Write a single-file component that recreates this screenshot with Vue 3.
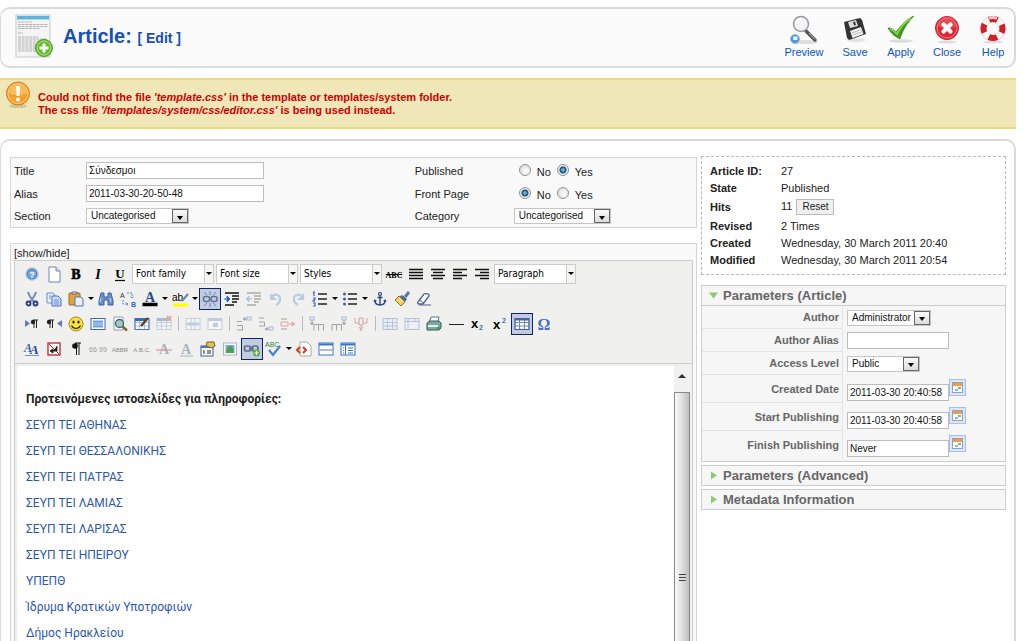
<script setup>
import { ref } from 'vue'

const title = ref('Σύνδεσμοι')
const alias = ref('2011-03-30-20-50-48')
const published = ref('yes')
const frontPage = ref('no')
const createdDate = ref('2011-03-30 20:40:58')
const startDate = ref('2011-03-30 20:40:58')
const finishDate = ref('Never')
const authorAlias = ref('')

const actions = [
  { name: 'Preview', art: '<ellipse cx="17" cy="28" rx="13" ry="2" fill="#ddd"/><path d="M18 17l9 9" stroke="#555" stroke-width="3.5" stroke-linecap="round"/><path d="M21 19l6 6.500" stroke="#bbb" stroke-width="1"/><circle cx="13" cy="10" r="7.500" fill="#f1f3f4" stroke="#999" stroke-width="1.500"/><path d="M8 10a5 5 0 0 1 5-5" fill="none" stroke="#fff" stroke-width="2"/><circle cx="7" cy="25" r="4.500" fill="#4d98dd" stroke="#8cbcea"/><rect x="5" y="22.500" width="4.500" height="3.500" rx="1" fill="#fff"/>' },
  { name: 'Save', art: '<ellipse cx="17" cy="26" rx="9" ry="2" fill="#e2e2e2"/><path d="M5 8L21 4l2 2 4 14-17 6-2-2z" fill="#333"/><path d="M9 8l8-2 2 6-8 2z" fill="#ddd"/><path d="M14 8l2-.500 1 3.500-2 .500z" fill="#333"/><path d="M11 17l11-4 2.500 7-11 4z" fill="#f5f5f5"/><path d="M12.500 19l10-3.500M13.500 21l10-3.500" stroke="#aaa" stroke-width=".8"/>' },
  { name: 'Apply', art: '<ellipse cx="16" cy="27" rx="12" ry="1.800" fill="#ddd"/><path d="M3 14c3-.500 5 1 8 4C16 11 22 5 29 2c-6 6-11 13-14 23-4-2-9-5-12-11z" fill="#3c9b12" stroke="#2c7c0b" stroke-width=".6"/><path d="M5 15c3 .5 4 2.500 7 5C16 12 20 8 26 4" fill="none" stroke="#86d353" stroke-width="1.800"/>' },
  { name: 'Close', art: '<ellipse cx="16" cy="28" rx="10" ry="1.500" fill="#ddd"/><circle cx="16" cy="14" r="11.500" fill="#e02633" stroke="#c41f2b"/><circle cx="16" cy="14" r="10" fill="none" stroke="#f18088"/><path d="M6.500 12a9.500 9.500 0 0 1 19 0c-5 3-13 3-19 0z" fill="#ee6169" opacity=".6"/><path d="M12.500 10.500l7 7M19.500 10.500l-7 7" stroke="#fff" stroke-width="4.200" stroke-linecap="round"/>' },
  { name: 'Help', art: '<ellipse cx="16" cy="28" rx="10" ry="1.500" fill="#ddd"/><circle cx="16" cy="14.500" r="9.500" fill="none" stroke="#ccc" stroke-width="6.500"/><circle cx="16" cy="14.500" r="9.500" fill="none" stroke="#f7f7f7" stroke-width="5.500"/><circle cx="16" cy="14.500" r="9.500" fill="none" stroke="#d51d25" stroke-width="6" stroke-dasharray="8.500 6.420" stroke-dashoffset="4.250"/><path d="M12 4.200a11 11 0 0 1 8 0" fill="none" stroke="#f6c3c5" stroke-width="3"/>' }
]

const lines = (set) => '<path d="' + set.map(([x, y, w]) => `M${x} ${y}h${w}`).join('') + '" stroke="#111" stroke-width="1.500"/>'
const grid = (c, f) => `<rect x="3" y="4.500" width="14" height="11" fill="${f}" stroke="${c}"/><path d="M3 8.500h14M3 12h14M7.500 4.500v11M12.500 4.500v11" stroke="${c}"/>`
const doc = '<path d="M5 3h7l4 4v11H5z" fill="#fff" stroke="#6d86b3"/><path d="M12 3v4h4" fill="#dbe5f6" stroke="#6d86b3"/>'

const art = {
  help: '<circle cx="10" cy="10" r="6" fill="#74a6da" stroke="#b2c6dd" stroke-width="1.500"/><circle cx="10" cy="10" r="4.800" fill="none" stroke="#4d80ba"/><text x="10" y="13.500" text-anchor="middle" font-size="9" font-weight="bold" fill="#fff">?</text>',
  newdoc: doc,
  bold: '<text x="10" y="15" text-anchor="middle" font-family="Liberation Serif" font-size="14" font-weight="bold" stroke="#000" stroke-width=".6">B</text>',
  italic: '<text x="10" y="15" text-anchor="middle" font-family="Liberation Serif" font-size="14" font-weight="bold" font-style="italic">I</text>',
  underline: '<text x="10" y="14" text-anchor="middle" font-family="Liberation Serif" font-size="13" font-weight="bold">U</text><path d="M5 16.500h10" stroke="#000" stroke-width="1.200"/>',
  strike: '<text x="10" y="13.500" text-anchor="middle" font-family="Liberation Serif" font-size="8" font-weight="bold">ABC</text><path d="M2 10.500h16" stroke="#000"/>',
  justify: lines([[3, 5.5, 14], [3, 8.5, 14], [3, 11.5, 14], [3, 14.5, 14]]),
  center: lines([[3, 5.5, 14], [5, 8.5, 10], [3, 11.5, 14], [5, 14.5, 10]]),
  left: lines([[3, 5.5, 14], [3, 8.5, 9], [3, 11.5, 14], [3, 14.5, 9]]),
  right: lines([[3, 5.5, 14], [8, 8.5, 9], [3, 11.5, 14], [8, 14.5, 9]]),
  cut: '<path d="M6 3c1 4 3 6 6 10M14 3c-1 4-3 6-6 10" stroke="#7590b8" stroke-width="2" fill="none"/><circle cx="6.500" cy="14.500" r="2" fill="none" stroke="#243f87" stroke-width="1.800"/><circle cx="13.500" cy="14.500" r="2" fill="none" stroke="#243f87" stroke-width="1.800"/>',
  copy: '<path d="M3 4h6l2 2v8H3z" fill="#e6effd" stroke="#6e8fcd"/><path d="M8 7h6l3 3v7H8z" fill="#c9dcf9" stroke="#4d72ba"/><path d="M10 11h5M10 13h5M10 15h5M5 7h2M5 9h2" stroke="#6e8fcd"/>',
  paste: '<rect x="3" y="4" width="11" height="12" rx="1" fill="#dfa43b" stroke="#9b6c1d"/><path d="M6 5V3h5v2z" fill="#eee" stroke="#666"/><path d="M9 8h6l2 2v7H9z" fill="#e9f1fe" stroke="#5275b4"/>',
  find: '<path d="M5 4h3v4h4V4h3l2 8v4h-5v-5H8v5H3v-4z" fill="#6b90cc" stroke="#3d5c9c"/><path d="M5 9l-1 4M14 9l1 4" stroke="#c9daf6"/>',
  replace: '<text x="2" y="9" font-size="7" fill="#333">A</text><text x="13" y="18" font-size="7" font-weight="bold" fill="#3764c8">B</text><path d="M9 4h5v5M14 9l-2-2M14 9l2-2M5 11v4h5M10 15l-2-2M10 15l-2 2" stroke="#5886d0" fill="none" stroke-dasharray="2 1"/>',
  forecolor: '<text x="10" y="13" text-anchor="middle" font-family="Liberation Serif" font-size="14" font-weight="bold" fill="#244c8e">A</text><path d="M2.500 15.500h15" stroke="#000" stroke-width="3.500"/>',
  backcolor: '<text x="2" y="12" font-size="10">ab</text><path d="M12 12l6-7" stroke="#6c86ac" stroke-width="2"/><path d="M3 16h15" stroke="#ff0" stroke-width="3"/>',
  unlink: '<rect x="3.500" y="7.500" width="6" height="5" rx="2" fill="none" stroke="#597398" stroke-width="1.500"/><rect x="11" y="7.500" width="6" height="5" rx="2" fill="none" stroke="#597398" stroke-width="1.500"/><path d="M10 2v4M10 14v4M4 3l3 3M16 3l-3 3M4 17l3-3M16 17l-3-3" stroke="#7285a4"/>',
  outdent: '<path d="M3 4h14M10 7h7M10 10h7M10 13h5M3 16h9" stroke="#111" stroke-width="1.500"/><path d="M2 10h6M8 10l-3-3v6z" fill="#2d62bb" stroke="#2d62bb"/>',
  indent: '<g opacity=".3"><path d="M3 4h14M10 7h7M10 10h7M10 13h5M3 16h9" stroke="#111" stroke-width="1.500"/><path d="M2 10h6M2 10l3-3v6z" fill="#2d62bb" stroke="#2d62bb"/></g>',
  undo: '<path d="M5 8c5-5 10-1 9 3 0 2-2 4-4 5" fill="none" stroke="#b8cbe1" stroke-width="2.200"/><path d="M4 4v7h7z" fill="#b8cbe1"/>',
  redo: '<path d="M15 8C10 3 5 7 6 11c0 2 2 4 4 5" fill="none" stroke="#b8cbe1" stroke-width="2.200"/><path d="M16 4v7H9z" fill="#b8cbe1"/>',
  numlist: '<path d="M8 5h9M8 10h9M8 15h9" stroke="#222" stroke-width="1.600"/><path d="M3 4l1-1v4M3 9h2v1l-2 2h2M3 14h2v3H3" fill="none" stroke="#3665c9" stroke-width="1.200"/>',
  bullist: '<path d="M8 5h9M8 10h9M8 15h9" stroke="#222" stroke-width="1.600"/><circle cx="4.500" cy="5" r="1.500" fill="#3c61a1"/><circle cx="4.500" cy="10" r="1.500" fill="#3c61a1"/><circle cx="4.500" cy="15" r="1.500" fill="#3c61a1"/>',
  anchor: '<circle cx="10" cy="5" r="1.500" fill="none" stroke="#234889" stroke-width="1.200"/><path d="M10 6.500v9M7.500 8.500h5M5 11.500c0 3 2 4.500 5 4.500s5-1.500 5-4.500" fill="none" stroke="#234889" stroke-width="1.400"/><path d="M3.500 13l1-3 2.500 2zM16.500 13l-1-3-2.500 2z" fill="#234889"/>',
  clean: '<path d="M13 8l4-5" stroke="#5a78a8" stroke-width="3"/><path d="M10 6l5 4-2 3-6-5z" fill="#49699c"/><path d="M7 7l6 6-4 4-6-6z" fill="#f2cc56" stroke="#9a7a28"/><path d="M7 9l4 4M6 11l3 3" stroke="#fff4ba"/>',
  eraser: '<path d="M4 13l6-8c2-1 6 0 5 2l-6 8H5c-1 0-2-1-1-2z" fill="#fff" stroke="#49658f" stroke-width="1.300"/><path d="M5 11l5 3M5 16h12" stroke="#49658f"/>',
  ltr: '<path d="M3 6v7l5-3.500z" fill="#5b7cb5"/><path d="M12 6v8M14.500 6v8M16 6h-5" stroke="#222"/><circle cx="11" cy="8" r="2.200" fill="#222"/>',
  rtl: '<path d="M18 6v7l-5-3.500z" fill="#5b7cb5"/><path d="M6 6v8M8.500 6v8M10 6H5" stroke="#222"/><circle cx="5" cy="8" r="2.200" fill="#222"/>',
  smile: '<circle cx="10" cy="10" r="7" fill="#fde338" stroke="#a7861b"/><ellipse cx="7.500" cy="8" rx="1" ry="1.600"/><ellipse cx="12.500" cy="8" rx="1" ry="1.600"/><path d="M5.500 11.500c2 4 7 4 9 0" fill="none" stroke="#222" stroke-width="1.200"/>',
  screen: '<rect x="3" y="4.500" width="14" height="11" fill="#fff" stroke="#3969b5"/><rect x="5" y="6.500" width="10" height="7" fill="#6f9fdf"/><path d="M5 9h10M5 11h10" stroke="#b6d2f5"/>',
  preview: '<path d="M4 3h9v13H4z" fill="#fff" stroke="#8da0bd"/><circle cx="9.500" cy="9.500" r="4" fill="#9dcfba" stroke="#47617d" stroke-width="1.300"/><path d="M12.500 12.500l4.500 4" stroke="#806235" stroke-width="2.500"/>',
  tableedit: grid('#a9bfe0', '#fff') + '<rect x="3" y="4.500" width="14" height="11" fill="none" stroke="#4c73b3"/><path d="M3 5.500h12" stroke="#3b6bbb" stroke-width="3"/><path d="M9 12l7-8" stroke="#5c4823" stroke-width="2.500"/>',
  tabledel: '<g opacity=".4">' + grid('#7c9dd0', '#fff') + '<path d="M3 5.500h12" stroke="#3b6bbb" stroke-width="3"/><path d="M13 2l4 5M17 2l-4 5" stroke="#c33" stroke-width="2"/></g>',
  rowprops: '<g opacity=".4"><rect x="3" y="4.500" width="14" height="11" fill="#fff" stroke="#889bbd"/><path d="M3 10h14M8 5v10M12 5v10" stroke="#889bbd"/><path d="M4 10h12" stroke="#6f9be8" stroke-width="3"/></g>',
  cellprops: '<g opacity=".4"><rect x="3" y="4.500" width="14" height="11" fill="#fff" stroke="#889bbd"/><path d="M3 6h14" stroke="#6f9be8" stroke-width="2"/><rect x="8" y="9" width="5" height="4" fill="#6f9be8"/></g>',
  rowbefore: '<g opacity=".4" stroke="#333" fill="none"><path d="M3 7.500h5M3 11.500h5.500M3 16h5.500M8.500 11.500v5"/><path d="M9 5h4M9 5l2-1.500v3z"/><rect x="13" y="3" width="4" height="3" stroke="#36c"/></g>',
  rowafter: '<g opacity=".4" stroke="#333" fill="none"><path d="M3 4h5M3 8h5.500M3 12h5.500M8.500 8v4.500"/><path d="M9 15h4M9 15l2-1.500v3z"/><rect x="13" y="13" width="4" height="3" stroke="#36c"/></g>',
  rowdel: '<g opacity=".4" fill="none"><path d="M3 5h6M3 15h6" stroke="#333"/><path d="M3 8h7v4H3zM11 10h6M17 10l-3-2v4z" stroke="#c33"/></g>',
  colbefore: '<g opacity=".4" stroke="#333" fill="none"><path d="M7 10.500h4.500v6M7 10.500v6M12 10.500h4.500v6"/><path d="M5 6v5M5 11l-1.500-2h3z"/><rect x="3" y="3" width="4" height="3" stroke="#36c"/></g>',
  colafter: '<g opacity=".4" stroke="#333" fill="none"><path d="M3 10.500h4.500v6M3 10.500v6M8 10.500h4.500v6"/><path d="M15 6v5M15 11l-1.500-2h3z"/><rect x="13" y="3" width="4" height="3" stroke="#36c"/></g>',
  coldel: '<g opacity=".4" fill="none"><path d="M4 4v5h4M16 4v5h-4" stroke="#c33"/><path d="M8 4h4v7H8zM10 11v6M8 13l2 3 2-3" stroke="#a33"/></g>',
  split: '<g opacity=".45">' + grid('#6b8cc2', '#e7effb') + '</g>',
  merge: '<g opacity=".45"><rect x="3" y="4.500" width="14" height="11" fill="#e7effb" stroke="#6b8cc2"/><path d="M3 7.500h14M6 4v12M13 4v3" stroke="#6b8cc2"/></g>',
  print: '<path d="M7 3h8l-1 5H5z" fill="#fff" stroke="#597282"/><path d="M3 9l3-2h9l2 2v5l-2 2H3z" fill="#7fa6a0" stroke="#355a5a"/><path d="M4 12h10" stroke="#dfeeea" stroke-width="2"/><path d="M13 14h3" stroke="#39a439" stroke-width="2"/>',
  hr: '<path d="M3 10.500h15" stroke="#222"/>',
  sub: '<text x="3" y="14" font-size="13" font-weight="bold">x</text><text x="11" y="16" font-size="7" font-weight="bold" fill="#3f719f">2</text>',
  sup: '<text x="3" y="15" font-size="13" font-weight="bold">x</text><text x="12" y="9" font-size="7" font-weight="bold" fill="#3f719f">2</text>',
  visual: grid('#6f89b8', '#fff') + '<rect x="3" y="4.500" width="14" height="11" fill="none" stroke="#4265a3"/><path d="M3 5.500h14" stroke="#4265a3" stroke-width="2"/>',
  omega: '<text x="10" y="15.500" text-anchor="middle" font-family="Liberation Serif" font-size="16" font-weight="bold" fill="#4a72c4">Ω</text>',
  styleprops: '<text x="2" y="13" font-family="Liberation Serif" font-size="12" font-style="italic" font-weight="bold" fill="#2f65bd">A</text><text x="8" y="15" font-family="Liberation Serif" font-size="13" font-style="italic" font-weight="bold" fill="#26458c">A</text><path d="M3 16.500h14" stroke="#7293c6"/>',
  nobreak: '<rect x="4" y="4" width="12" height="12" fill="#fff" stroke="#c2212b" stroke-width="1.300"/><path d="M5 5l10 10" stroke="#c2212b"/><path d="M13 7v5H9M9 10v4l-3-2z" fill="#222" stroke="#222"/>',
  para: '<path d="M10.500 4v12M13 4v12M15 4H9" stroke="#111"/><circle cx="9" cy="7" r="2.800" fill="#111"/>',
  quote: '<text x="1" y="13" font-size="7" fill="#999">66</text><text x="11" y="13" font-size="7" fill="#999">99</text>',
  abbr: '<text x="10" y="13" text-anchor="middle" font-size="6" fill="#888">ABBR</text>',
  acro: '<text x="10" y="13" text-anchor="middle" font-size="6" fill="#888">A.B.C.</text>',
  del: '<text x="10" y="15" text-anchor="middle" font-family="Liberation Serif" font-size="14" font-weight="bold" fill="#aab2bf">A</text><path d="M2 11h16" stroke="#dd9b9b" stroke-width="1.300"/>',
  ins: '<text x="10" y="15" text-anchor="middle" font-family="Liberation Serif" font-size="14" font-weight="bold" fill="#aab2bf">A</text><path d="M4 17h13" stroke="#a5bcaa"/>',
  attribs: '<rect x="3" y="7" width="12" height="10" fill="#fff" stroke="#375c98"/><path d="M3 8h12" stroke="#477ac5" stroke-width="2"/><path d="M5 12h2M5 14h2M9 12h4M9 14h4" stroke="#222"/><path d="M9 3h7l1 4-3 2-6-2z" fill="#e6bd57" stroke="#765e26"/>',
  image: '<rect x="3.500" y="4" width="13" height="12" fill="#fff" stroke="#a4b5cf"/><rect x="5.500" y="6" width="9" height="8" fill="#7fa5e7"/><path d="M6 14l1-5c2-3 5-2 6 0l1 5z" fill="#49a34b"/>',
  link: '<rect x="2.500" y="7" width="6" height="5" rx="2" fill="none" stroke="#5d718c" stroke-width="1.700"/><rect x="10" y="7" width="6" height="5" rx="2" fill="none" stroke="#5d718c" stroke-width="1.700"/><path d="M7 9.500h5" stroke="#5d718c" stroke-width="1.700"/><circle cx="14.500" cy="14" r="3.500" fill="#63af48"/><path d="M12.500 14h4M14.500 12v4" stroke="#fff"/>',
  spell: '<text x="1" y="8" font-size="7" fill="#3a8548">ABC</text><path d="M5 11l4 5 7-9" fill="none" stroke="#4884cd" stroke-width="2.300"/>',
  code: '<path d="M6 3h7l4 4v10H6z" fill="#fff" stroke="#aaa"/><path d="M6 8l-3 3 3 3M9 8l3 3-3 3" fill="none" stroke="#de3524" stroke-width="2"/>',
  pagebreak: '<rect x="3" y="4" width="14" height="12" fill="#fff" stroke="#3d76c4"/><path d="M3 5.500h14" stroke="#3d76c4" stroke-width="2"/><path d="M4 11h12" stroke="#64789a"/>',
  template: '<rect x="3" y="4" width="14" height="12" fill="#fff" stroke="#3d76c4"/><path d="M3 5.500h14" stroke="#3d76c4" stroke-width="2"/><path d="M7.500 6v10M10 9h5M10 11.500h5M10 14h5M5 9h1M5 11.500h1M5 14h1" stroke="#3d76c4"/>'
}

// "|" is a separator, "+" gives the button a drop-down arrow, "*" marks it as active,
// and "=" opens a list with the label that follows.
const toolbar = [
  'help newdoc bold italic underline =Font_family =Font_size =Styles strike justify center left right =Paragraph',
  'cut copy paste+ find replace forecolor+ backcolor+ unlink* outdent indent undo redo numlist+ bullist+ anchor clean eraser',
  'ltr rtl smile screen preview tableedit tabledel | rowprops cellprops | rowbefore rowafter rowdel | colbefore colafter coldel | split merge print hr sub sup visual* omega',
  'styleprops nobreak para quote abbr acro del ins attribs image link* spell+ code pagebreak template'
].map((row) => row.split(' ').map((t) => ({
  kind: t === '|' ? 'sep' : t[0] === '=' ? 'list' : 'button',
  name: t.replace(/[+*=]/g, '').replace('_', ' '),
  arrow: t.endsWith('+'),
  active: t.endsWith('*')
})))

const links = [
  'ΣΕΥΠ ΤΕΙ ΑΘΗΝΑΣ', 'ΣΕΥΠ ΤΕΙ ΘΕΣΣΑΛΟΝΙΚΗΣ', 'ΣΕΥΠ ΤΕΙ ΠΑΤΡΑΣ', 'ΣΕΥΠ ΤΕΙ ΛΑΜΙΑΣ', 'ΣΕΥΠ ΤΕΙ ΛΑΡΙΣΑΣ',
  'ΣΕΥΠ ΤΕΙ ΗΠΕΙΡΟΥ', 'ΥΠΕΠΘ', 'Ίδρυμα Κρατικών Υποτροφιών', 'Δήμος Ηρακλείου'
]
</script>

<template>
  <div class="page">
    <header class="head">
      <svg class="head-icon" viewBox="0 0 40 44" aria-hidden="true">
        <rect x="1" y="1" width="34" height="42" fill="#f4f4f4" stroke="#c9c9c9" />
        <rect x="2" y="2" width="32" height="3.500" fill="#5fb5d8" />
        <path d="M2 5.500h32" stroke="#a9d8ea" />
        <path d="M3 8h14M3 10.500h30M3 12.500h30M3 14.500h22M3 19h5M3 23h20M3 25h28M3 27h26M3 29h27M3 31h24M3 33h22M3 35h20M3 37h18" stroke="#b3b3b3" stroke-dasharray="3 .7" />
        <circle cx="29" cy="34" r="8.500" fill="#66bd2c" stroke="#4e9226" />
        <circle cx="29" cy="34" r="7" fill="none" stroke="#b3e687" />
        <path d="M29 29.500v9M24.500 34h9" stroke="#fff" stroke-width="3" />
      </svg>
      <h1>Article: <small>[ Edit ]</small></h1>
      <nav class="actions">
        <a v-for="a in actions" :key="a.name" href="#" :class="{ wide: a.name === 'Preview' }">
          <svg viewBox="0 0 32 32" aria-hidden="true" v-html="a.art"></svg>
          <span>{{ a.name }}</span>
        </a>
      </nav>
    </header>

    <div class="notice" role="alert">
      <svg viewBox="0 0 26 28" aria-hidden="true">
        <ellipse cx="13" cy="25" rx="9" ry="2" fill="#cfc597" />
        <circle cx="13" cy="12.500" r="11.500" fill="#f4a02a" stroke="#d67c14" />
        <circle cx="13" cy="12.500" r="10" fill="none" stroke="#fbd28a" />
        <path d="M4 12a9 9 0 0 1 18 0c-5 3-13 3-18 0z" fill="#fac873" opacity=".7" />
        <path d="M11 5h4l-.600 10h-2.800z" fill="#fff" />
        <circle cx="13" cy="18.500" r="2" fill="#fff" />
      </svg>
      <p>
        Could not find the file <em>'template.css'</em> in the template or templates/system folder.<br />
        The css file <em>'/templates/system/css/editor.css'</em> is being used instead.
      </p>
    </div>

    <main class="content">
      <div class="main-col">
        <form class="box details">
          <label for="title">Title</label>
          <input id="title" v-model="title" class="text" type="text" />
          <span id="published">Published</span>
          <div class="radios" role="radiogroup" aria-labelledby="published">
            <label><input v-model="published" type="radio" name="published" value="no" /><span>No</span></label>
            <label><input v-model="published" type="radio" name="published" value="yes" /><span>Yes</span></label>
          </div>

          <label for="alias">Alias</label>
          <input id="alias" v-model="alias" class="text" type="text" />
          <span id="front">Front Page</span>
          <div class="radios" role="radiogroup" aria-labelledby="front">
            <label><input v-model="frontPage" type="radio" name="front" value="no" /><span>No</span></label>
            <label><input v-model="frontPage" type="radio" name="front" value="yes" /><span>Yes</span></label>
          </div>

          <label for="section">Section</label>
          <span class="select section"><select id="section"><option>Uncategorised</option></select><i></i></span>
          <label for="category">Category</label>
          <span class="select category"><select id="category"><option>Uncategorised</option></select><i></i></span>
        </form>

        <section class="box editor">
          <a class="toggle" href="#">[show/hide]</a>
          <div class="mce">
            <div class="toolbar">
              <div v-for="(row, r) in toolbar" :key="r" class="tools">
                <template v-for="(t, i) in row" :key="i">
                  <span v-if="t.kind === 'sep'" class="sep"></span>
                  <span v-else-if="t.kind === 'list'" class="list">
                    <select :aria-label="t.name"><option>{{ t.name }}</option></select><i></i>
                  </span>
                  <template v-else>
                    <button type="button" class="tool" :class="{ active: t.active }" :aria-label="t.name">
                      <svg viewBox="0 0 20 20" fill="#000" v-html="art[t.name]"></svg>
                    </button>
                    <button v-if="t.arrow" type="button" class="more" :aria-label="t.name + ' options'"></button>
                  </template>
                </template>
              </div>
            </div>
            <div class="frame">
              <article class="doc">
                <p><strong>Προτεινόμενες ιστοσελίδες για πληροφορίες:</strong></p>
                <p v-for="l in links" :key="l"><a href="#">{{ l }}</a></p>
              </article>
              <div class="scroll">
                <span class="up"></span>
                <div class="thumb"><span></span></div>
              </div>
            </div>
          </div>
        </section>
      </div>

      <aside class="side-col">
        <dl class="info">
          <div><dt>Article ID:</dt><dd>27</dd></div>
          <div><dt>State</dt><dd>Published</dd></div>
          <div class="hits"><dt>Hits</dt><dd>11 <button type="button">Reset</button></dd></div>
          <div><dt>Revised</dt><dd>2 Times</dd></div>
          <div><dt>Created</dt><dd>Wednesday, 30 March 2011 20:40</dd></div>
          <div><dt>Modified</dt><dd>Wednesday, 30 March 2011 20:54</dd></div>
        </dl>

        <section class="panel">
          <h2><button type="button" aria-expanded="true"><i class="open"></i>Parameters (Article)</button></h2>
          <form class="params">
            <div class="row">
              <label for="author">Author</label>
              <div><span class="select author"><select id="author"><option>Administrator</option></select><i></i></span></div>
            </div>
            <div class="row">
              <label for="author-alias">Author Alias</label>
              <div><input id="author-alias" v-model="authorAlias" class="text" type="text" /></div>
            </div>
            <div class="row">
              <label for="access">Access Level</label>
              <div><span class="select access"><select id="access"><option>Public</option></select><i></i></span></div>
            </div>
            <div class="row date">
              <label for="created">Created Date</label>
              <div><input id="created" v-model="createdDate" class="text" type="text" /><button type="button" class="cal" aria-label="Pick created date"><i></i></button></div>
            </div>
            <div class="row date">
              <label for="start">Start Publishing</label>
              <div><input id="start" v-model="startDate" class="text" type="text" /><button type="button" class="cal" aria-label="Pick start date"><i></i></button></div>
            </div>
            <div class="row date">
              <label for="finish">Finish Publishing</label>
              <div><input id="finish" v-model="finishDate" class="text" type="text" /><button type="button" class="cal" aria-label="Pick finish date"><i></i></button></div>
            </div>
          </form>
        </section>
        <section class="panel">
          <h2><button type="button" aria-expanded="false"><i></i>Parameters (Advanced)</button></h2>
        </section>
        <section class="panel">
          <h2><button type="button" aria-expanded="false"><i></i>Metadata Information</button></h2>
        </section>
      </aside>
    </main>
  </div>
</template>

<style>
body { margin: 0; background: #fff; }
</style>

<style scoped>
.page {
  box-sizing: border-box;
  height: 100vh;
  overflow: hidden;
  padding: 7px 7px 0 0;
  font: 11px/14px "Liberation Sans", Arial, sans-serif;
  color: #222;
}
.page *, .page *::before { box-sizing: border-box; }
button, input, select { font: inherit; color: inherit; margin: 0; }
button { padding: 0; border: 0; background: none; }
a { color: #0b55c4; text-decoration: none; }

.head {
  display: flex;
  align-items: center;
  height: 61px;
  padding: 0 1px 0 12px;
  border: 2px solid #dadada;
  border-left-width: 1px;
  border-radius: 10px;
  background: #fbfbfb;
}
.head-icon { width: 40px; height: 44px; margin: 0 8px 4px 2px; }
h1 { flex: 1; margin: 0 0 2px; font-size: 20px; line-height: 24px; color: #1450b8; }
h1 small { font-size: 14px; }
.actions { display: flex; gap: 6px; padding-bottom: 3px; }
.actions a { display: flex; flex-direction: column; align-items: center; width: 40px; }
.actions .wide { width: 50px; }
.actions svg { width: 32px; height: 32px; fill: none; }
.actions span { line-height: 12px; }

.notice {
  display: flex;
  height: 51px;
  margin-top: 10px;
  padding-left: 5px;
  border-top: 2px solid #eadb82;
  border-bottom: 2px solid #eadb82;
  background: #efe7b8;
  color: #c00;
}
.notice svg { width: 26px; height: 28px; margin-top: 1px; flex: none; }
.notice p { margin: 11px 0 0 7px; font-weight: bold; line-height: 13px; }

.content {
  display: flex;
  align-items: flex-start;
  gap: 4px;
  margin-top: 10px;
  padding: 15px 8px 10px 9px;
  border: 2px solid #dadada;
  border-left-width: 1px;
  border-radius: 10px;
}
.main-col { flex: 1; min-width: 0; }
.side-col { width: 305px; flex: none; }
.box { border: 1px solid #d5d5d5; background: #f9f9f9; }

.details {
  display: grid;
  grid-template-columns: 72px minmax(178px, 11fr) 99px minmax(120px, 6fr);
  grid-template-rows: 23px 23px 22px;
  align-items: center;
  margin-top: 1px;
  padding: 1px 3px 0;
}
.text {
  width: 178px;
  height: 17px;
  padding: 0 2px;
  border: 1px solid #bdbdbd;
  border-radius: 0;
  background: #fff;
  font-size: 10px;
  color: #111;
}
.radios { display: flex; gap: 6px; padding-left: 5px; }
.radios label { display: flex; gap: 6px; }
.radios span { padding-top: 3px; }
.radios input {
  appearance: none;
  width: 12px;
  height: 12px;
  margin-top: 2px;
  border: 1px solid #929292;
  border-radius: 50%;
  background: radial-gradient(circle at 60% 60%, #fff, #d2d2d2);
}
.radios input:checked { background: radial-gradient(circle, #65b5dd 0 1px, #164669 3px, #e5eef3 4px); }

.select, .list { display: inline-grid; height: 16px; background: #fff; border: 1px solid #c5c5c5; }
.select select, .list select {
  grid-area: 1 / 1;
  appearance: none;
  width: 100%;
  height: 100%;
  padding: 0 0 0 4px;
  border: 0;
  border-radius: 0;
  background: none;
}
.select select { font-size: 10px; line-height: 12px; color: #111; }
.select i, .list i { grid-area: 1 / 1; justify-self: end; pointer-events: none; display: grid; place-items: center; }
.select i { width: 16px; height: 14px; border: 1px solid #666; background: linear-gradient(#fafafa, #dcdcdc); padding-top: 3px; }
.select i::before { content: ""; border: 3px solid transparent; border-top: 4px solid #000; border-bottom: 0; }
.section { width: 103px; }
.category { width: 97px; }

.editor { margin-top: 15px; padding: 2px 3px 3px; }
.toggle { display: block; color: #222; }
.mce { border: 1px solid #ccc; background: #f0f0ee; }
.toolbar { height: 103px; padding: 0 0 0 6px; border-bottom: 1px solid #ccc; }
.tools { display: flex; align-items: center; height: 25px; }
.tool { flex: none; width: 22px; height: 22px; }
.tool svg { display: block; width: 20px; height: 20px; margin: auto; font-family: "Liberation Sans", Arial, sans-serif; }
.tool.active { border: 1px solid #0a246a; background: #c2cbe0; }
.more { width: 8px; height: 20px; display: grid; place-items: center; }
.more::before { content: ""; border: 3px solid transparent; border-top: 3px solid #000; border-bottom: 0; }
.sep { width: 1px; height: 15px; margin: 0 3px; background: #bbb; }
.list { width: 82px; height: 20px; margin: 0 1px; border-color: #ccc; }
.list select { font-family: "DejaVu Sans Condensed", "Noto Sans", sans-serif; font-size: 10px; padding-left: 3px; color: #000; }
.list i { width: 9px; height: 18px; border-left: 1px solid #ccc; background: #f5f5f3; }
.list i::before { content: ""; border: 3px solid transparent; border-top: 3px solid #000; border-bottom: 0; }

.frame { display: flex; height: 440px; padding: 2px; }
.doc {
  flex: 1;
  padding: 26px 9px;
  background: #fff;
  font: 12px/14px Roboto, "Noto Sans", sans-serif;
}
.doc p { margin: 0 0 12px; }
.doc a { color: #2c57b2; }
.scroll { display: flex; flex-direction: column; width: 16px; background: #f1f1f1; }
.up { height: 26px; display: grid; place-items: center; padding-bottom: 6px; }
.up::before { content: ""; border: 4px solid transparent; border-bottom: 4px solid #333; border-top: 0; }
.thumb {
  display: grid;
  place-items: center;
  flex: 0 0 372px;
  border: 1px solid #888;
  background: linear-gradient(90deg, #fafafa, #e2e2e2 45%, #bdbdc3);
}
.thumb span { width: 7px; height: 8px; background: repeating-linear-gradient(#444 0 1px, #ddd 1px 3px); }

.info {
  margin: 0;
  padding: 5px 8px 6px;
  border: 1px dashed #b8b8b8;
}
.info div { display: flex; align-items: center; height: 17px; }
.info .hits { height: 21px; }
.info dt { width: 71px; font-weight: bold; }
.info dd { margin: 0; }
.info button { width: 38px; height: 16px; margin-left: 1px; border: 1px solid #bbb; background: #f0f0f0; font-size: 10px; line-height: 12px; }

.panel { margin-top: 3px; border: 1px solid #ccc; background: #f6f6f6; }
.info + .panel { margin-top: 10px; }
.panel h2 { margin: 0; font-size: 13px; line-height: 19px; }
.panel h2 button { display: flex; align-items: center; width: 100%; height: 19px; font-weight: bold; color: #666; }
.panel h2 i { width: 10px; height: 10px; margin: 0 4px 0 7px; background: #8acb6d; clip-path: polygon(20% 10%, 80% 50%, 20% 90%); }
.panel h2 i.open { clip-path: polygon(0 20%, 90% 20%, 45% 80%); }
.params { padding-bottom: 2px; border-top: 1px solid #ccc; }
.row { display: grid; grid-template-columns: 141px 1fr; height: 23px; align-items: stretch; }
.row label {
  display: grid;
  align-items: center;
  justify-items: end;
  padding-right: 3px;
  border-right: 1px solid #e4e4e4;
  border-bottom: 1px solid #e4e4e4;
  font-weight: bold;
  color: #666;
}
.row > div { display: flex; align-items: center; padding-left: 4px; }
.row.date { height: 28px; }
.row.date > div { align-items: flex-end; padding-bottom: 2px; }
.row:last-child label { border-bottom: 0; }
.params .text { width: 102px; }
.author { width: 84px; }
.access { width: 73px; }
.cal { width: 17px; height: 17px; margin-bottom: 5px; padding: 2px; border: 1px solid #a9bfe4; background: #dbe6f7; }
.cal i {
  display: block;
  height: 11px;
  border: 1px solid #8da2c4;
  background:
    linear-gradient(#f09a4e, #f09a4e) 0 0 / 9px 3px no-repeat,
    linear-gradient(#83b874, #83b874) 5px 4px / 3px 2px no-repeat,
    linear-gradient(#8fb1dc, #8fb1dc) 2px 6px / 3px 2px no-repeat,
    #fff;
}
</style>
